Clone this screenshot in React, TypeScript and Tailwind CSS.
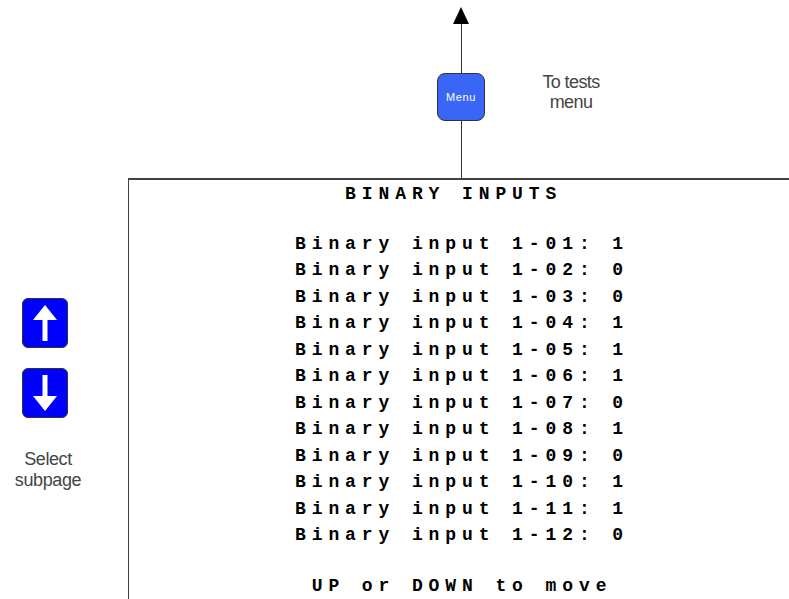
const rows = [
  ["01", 1],
  ["02", 0],
  ["03", 0],
  ["04", 1],
  ["05", 1],
  ["06", 1],
  ["07", 0],
  ["08", 1],
  ["09", 0],
  ["10", 1],
  ["11", 1],
  ["12", 0],
];

function ArrowButton({ down }: { down?: boolean }) {
  return (
    <div className="w-[46px] h-[50px] rounded-[6px] bg-[#0000ff] border border-[#333] flex items-center justify-center">
      <svg width="30" height="40" viewBox="0 0 30 40" className={down ? "rotate-180" : ""}>
        <polygon points="15,2 3,17 27,17" fill="#fff" />
        <rect x="12.5" y="15" width="5" height="23" fill="#fff" />
      </svg>
    </div>
  );
}

export default function App() {
  return (
    <div className="w-[789px] h-[599px] overflow-hidden bg-white flex flex-col font-['Liberation_Sans',Arial,sans-serif]">
      {/* top: menu key with arrow */}
      <div className="h-[178px] flex shrink-0">
        <div className="ml-[437px] w-[48px] flex flex-col items-center">
          <svg width="18" height="18" viewBox="0 0 18 18" className="mt-[6px]">
            <polygon points="9,1 1,18 17,18" fill="#000" />
          </svg>
          <div className="w-px h-[49px] bg-[#333]" />
          <div className="w-[48px] h-[48px] rounded-[8px] bg-[#3a66f6] border border-[#333] flex items-center justify-center text-white text-[11px] tracking-[0.6px]">
            Menu
          </div>
          <div className="w-px flex-1 bg-[#333]" />
        </div>
        <div className="ml-[36px] mt-[72px] w-[100px] text-center text-[18px] leading-[20px] text-[#444] tracking-[-0.6px]">
          <div>To tests</div>
          <div>menu</div>
        </div>
      </div>

      {/* bottom: subpage keys and display */}
      <div className="flex flex-1">
        <div className="w-[128px] shrink-0 flex flex-col items-center pt-[120px]">
          <div className="ml-[-38px] flex flex-col gap-[20px]">
            <ArrowButton />
            <ArrowButton down />
          </div>
          <div className="ml-[-32px] mt-[31px] text-center text-[18px] leading-[21px] text-[#444] tracking-[-0.4px]">
            <div>Select</div>
            <div>subpage</div>
          </div>
        </div>
        <div className="flex-1 border-l border-t-2 border-[#404040] pl-[166px] pt-[1px] font-['Liberation_Mono','Courier_New',monospace] font-bold text-[18px] leading-[26.5px] tracking-[5.9px] text-black whitespace-pre">
          <div>{"   BINARY INPUTS"}</div>
          <div className="mt-[23px]">
            {rows.map(([n, v]) => (
              <div key={n}>{`Binary input 1-${n}: ${v}`}</div>
            ))}
          </div>
          <div className="mt-[24px]">{" UP or DOWN to move"}</div>
        </div>
      </div>
    </div>
  );
}
